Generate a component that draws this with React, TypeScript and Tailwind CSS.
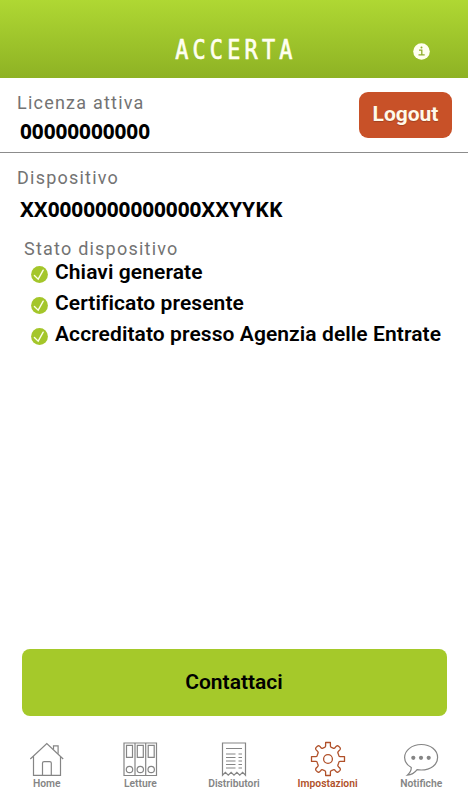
import type { ReactNode } from "react";

type TabItem = {
  id: string;
  label: string;
  icon: ReactNode;
};

const STATUS_ROWS = [
  "Chiavi generate",
  "Certificato presente",
  "Accreditato presso Agenzia delle Entrate"
];

const ACTIVE_TAB = "impostazioni";

function InfoIcon() {
  return (
    <svg className="h-[17px] w-[17px]" viewBox="0 0 17 17" fill="none">
      <circle cx="8.5" cy="8.5" r="8.3" fill="#fffff0" />
      <path d="M6 7.1h2.8v4.6M5.5 11.9h6.2" stroke="#8fae2a" strokeWidth="1.3" />
      <circle cx="8.5" cy="4.6" r="1" fill="#8fae2a" />
    </svg>
  );
}

function CheckIcon() {
  return (
    <svg className="h-[17px] w-[17px] shrink-0" viewBox="0 0 17 17" fill="none">
      <circle cx="8.5" cy="8.5" r="8.4" fill="#a4c62a" />
      <path d="M3.4 9.6l3.8 3.6 5-9" stroke="#fbffe8" strokeWidth="1.4" strokeLinecap="round" />
    </svg>
  );
}

function HomeIcon() {
  return (
    <svg className="h-9 w-9" viewBox="0 0 36 36" fill="none" stroke="currentColor" strokeWidth="1.2">
      <path d="M1.3 18L17.8 2.500l16.400 15.500M4.500 15.500v18.800h27v-18.800" />
      <path d="M24.500 8.500V4.800h4.600v8" />
      <path d="M13.500 34V22.100q0-1.500 1.600-1.500h5.600q1.600 0 1.600 1.500V34" />
    </svg>
  );
}

function BindersIcon() {
  return (
    <svg className="h-9 w-9" viewBox="0 0 36 36" fill="none" stroke="currentColor" strokeWidth="1.2">
      <path d="M2 2h32.500v32.500H2zM13 2v32.500M23.700 2v32.500" />
      <path d="M4.500 4.300h6v12h-6zM15.300 4.300h6v12h-6zM26.200 4.300h6v12h-6z" />
      <circle cx="7.500" cy="28.500" r="3.200" />
      <circle cx="18.300" cy="28.500" r="3.200" />
      <circle cx="29.200" cy="28.500" r="3.200" />
    </svg>
  );
}

function ReceiptIcon() {
  return (
    <svg className="h-9 w-9" viewBox="0 0 36 36" fill="none" stroke="currentColor" strokeWidth="1.2">
      <path d="M6.500 34.200V2h23v32.200l-2.870-2.900-2.880 2.900-2.870-2.900-2.880 2.900-2.870-2.900-2.880 2.900-2.870-2.900z" />
      <path d="M10 7.500h16M10 13h9.500M22.500 13H26M10 16.500h9.500M22.500 16.500H26M10 20h9.500M22.500 20H26M10 23.500h9.500M22.500 23.500H26M10 27h9.500M22.500 27H26" />
    </svg>
  );
}

function GearIcon() {
  return (
    <svg className="h-9 w-9" viewBox="0 0 36 36" fill="none" stroke="currentColor" strokeWidth="1.3">
      <path
        d="M15.600 1.500h4.800v3.600q0 1 1 1.300l1.700.7q1.300.7 2-.5 1.800-2.700 3.500-1.400l1.200 1.200q1.500 1.800-1 3.500-1.300 1-.9 2.200l.7 1.700q.3 1.800 1.300 1.800h4.600v4.800h-4.600q-1 0-1.300 1.800l-.7 1.700q-.4 1.200.9 2.200 2.500 1.700 1 3.500l-1.200 1.200q-1.700 1.300-3.500-1.400-.7-1.200-2-.5l-1.700.7q-1 .3-1 1.300v3.600h-4.800v-3.600q0-1-1-1.300l-1.700-.7q-1.300-.7-2 .5-1.800 2.700-3.500 1.400l-1.200-1.200q-1.500-1.800 1-3.500 1.300-1 .9-2.200l-.7-1.700q-.3-1.800-1.300-1.800H1.500v-4.800h4.600q1 0 1.300-1.800l.7-1.700q.4-1.200-.9-2.200-2.500-1.700-1-3.500l1.200-1.200q1.700-1.300 3.500 1.400.7 1.200 2 .5l1.700-.7q1-.3 1-1.300z"
        strokeLinejoin="round"
      />
      <circle cx="18" cy="18" r="4.400" />
    </svg>
  );
}

function ChatIcon() {
  return (
    <svg className="h-9 w-9" viewBox="0 0 36 36" fill="none" stroke="currentColor" strokeWidth="1.2">
      <path d="M8.300 26.500C3.800 24 1.600 20.500 1.600 16.600 1.600 9.400 8.900 3.500 18.300 3.500s16.300 5.800 16.300 13S27.700 29 18.300 29c-1.500 0-2.800-.1-4.200-.4-2.400 3.200-5.700 5.300-9.800 5.500 2.500-2 4-4.400 4-7.600z" />
      <g fill="currentColor" stroke="none">
        <circle cx="10.300" cy="16.800" r="2.100" />
        <circle cx="18" cy="16.800" r="2.100" />
        <circle cx="25.700" cy="16.800" r="2.100" />
      </g>
    </svg>
  );
}

const TABS: TabItem[] = [
  { id: "home", label: "Home", icon: <HomeIcon /> },
  { id: "letture", label: "Letture", icon: <BindersIcon /> },
  { id: "distributori", label: "Distributori", icon: <ReceiptIcon /> },
  { id: "impostazioni", label: "Impostazioni", icon: <GearIcon /> },
  { id: "notifiche", label: "Notifiche", icon: <ChatIcon /> }
];

function FieldLabel({ children }: { children: ReactNode }) {
  return (
    <div className="text-[18px] leading-6 tracking-[1.22px] whitespace-nowrap text-[#737373]">
      {children}
    </div>
  );
}

function FieldValue({ children }: { children: ReactNode }) {
  return (
    <div className="pl-[3px] font-['Noto_Sans',sans-serif] text-[20.8px] leading-[26px] font-bold tracking-[-0.08px] whitespace-nowrap text-black">
      {children}
    </div>
  );
}

export default function App() {
  return (
    <div className="flex h-[800px] w-[468px] flex-col overflow-hidden bg-white font-['Roboto',sans-serif]">
      <header className="grid h-[78px] shrink-0 grid-cols-[1fr_auto_1fr] bg-linear-to-b from-[#afd833] to-[#8eb224] pt-[35px]">
        <h1 className="col-start-2 scale-x-[0.84] pt-px pl-[5px] font-['DejaVu_Sans_Mono',monospace] text-[26px] leading-7 tracking-[5px] text-[#fffff0] [-webkit-text-stroke:0.7px_#fffff0]">
          ACCERTA
        </h1>
        <div className="flex justify-end pt-2 pr-[38px]">
          <InfoIcon />
        </div>
      </header>

      <section className="flex h-[75px] shrink-0 justify-between border-b border-[#8c8c8c] pr-4 pl-[17px]">
        <div className="pt-[13px]">
          <FieldLabel>Licenza attiva</FieldLabel>
          <div className="pt-[3px]">
            <FieldValue>00000000000</FieldValue>
          </div>
        </div>
        <button
          type="button"
          className="mt-3.5 h-[46px] w-[93px] rounded-[9px] bg-[#c85128] text-[21px] font-bold text-[#fff9ea] text-shadow-xs"
        >
          Logout
        </button>
      </section>

      <main className="flex grow flex-col pt-[13px]">
        <div className="pl-[17px]">
          <FieldLabel>Dispositivo</FieldLabel>
          <div className="pt-[6px]">
            <FieldValue>XX0000000000000XXYYKK</FieldValue>
          </div>
        </div>
        <div className="pt-[15px] pl-6">
          <FieldLabel>Stato dispositivo</FieldLabel>
        </div>
        <ul className="-mt-[5px] pl-[31px]">
          {STATUS_ROWS.map((row) => (
            <li key={row} className="flex h-[31px] items-center gap-[7px]">
              <div className="pt-1.5">
                <CheckIcon />
              </div>
              <span className="text-[21px] leading-6 font-semibold tracking-[0.08px] whitespace-nowrap text-black">
                {row}
              </span>
            </li>
          ))}
        </ul>
        <button
          type="button"
          className="mx-auto mt-auto mb-[11px] h-[67px] w-[425px] rounded-lg bg-[#a5c92a] text-[21px] font-semibold text-black"
        >
          Contattaci
        </button>
      </main>

      <nav className="grid h-[73px] shrink-0 grid-cols-5 pt-[14px]">
        {TABS.map((tab) => (
          <div
            key={tab.id}
            className={
              tab.id === ACTIVE_TAB
                ? "flex flex-col items-center text-[#b05029]"
                : "flex flex-col items-center text-[#858585]"
            }
          >
            {tab.icon}
            <span className="text-[10.3px] leading-[13px] font-semibold whitespace-nowrap">
              {tab.label}
            </span>
          </div>
        ))}
      </nav>
    </div>
  );
}
